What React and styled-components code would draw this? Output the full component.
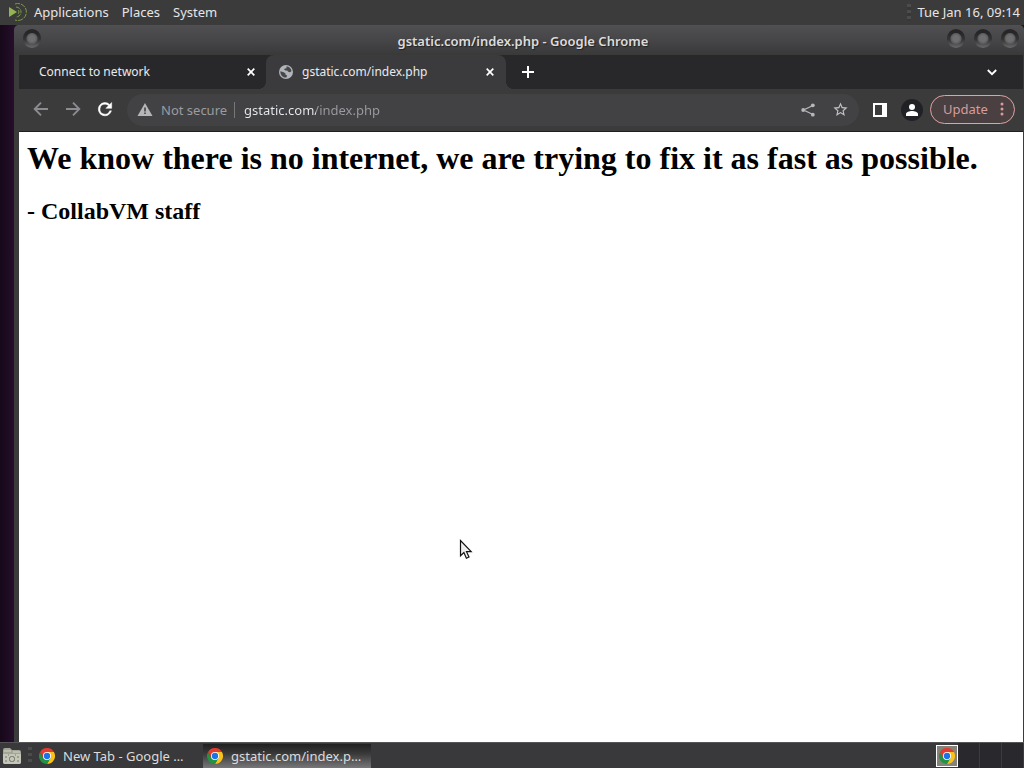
import styled, { createGlobalStyle, css } from "styled-components";

const GlobalStyle = createGlobalStyle`
  * {
    box-sizing: border-box;
  }

  body {
    margin: 0;
    background: #1c0a20;
    font-family: "Noto Sans", sans-serif;
    font-size: 13px;
    line-height: 18px;
  }

  button,
  input {
    margin: 0;
    padding: 0;
    border: 0;
    background: none;
    color: inherit;
    font: inherit;
  }

  svg {
    display: block;
    flex: none;
  }
`;

const Desktop = styled.div`
  min-height: 100vh;
  display: flex;
  flex-direction: column;
  position: relative;
  background: linear-gradient(90deg, #170819, #250e2b 14px);
`;

const TopPanel = styled.header`
  height: 25px;
  padding: 0 4px 1px 8px;
  display: flex;
  align-items: center;
  background: #3b3b3c;
  color: #e6e6e6;
`;

const MenuButton = styled.button`
  height: 24px;
  margin-right: 13px;
  display: flex;
  align-items: center;
  gap: 7px;
`;

const Clock = styled.time`
  margin-left: 6px;
  white-space: nowrap;
`;

const Grip = styled.span`
  width: 4px;
  height: 17px;
  margin-left: ${(props) => (props.$end ? "auto" : "6px")};
  background: repeating-linear-gradient(#4c4c4e 0 3px, #373738 3px 6px);
`;

const Window = styled.main`
  flex: 1;
  margin-left: 14px;
  padding: 0 1px 0 5px;
  display: flex;
  flex-direction: column;
  background: #3b3b3c;
  border-radius: 5px 5px 0 0;
`;

const TitleBar = styled.div`
  height: 30px;
  margin: 0 -1px 0 -5px;
  padding: 4px 5px 0 9px;
  display: grid;
  grid-template-columns: 72px 1fr 72px;
  align-items: start;
  background: linear-gradient(#505052, #464648 50%, #39393a);
  border-radius: 5px 5px 0 0;
`;

const WindowTitle = styled.div`
  padding: 3px 0 0 4px;
  text-align: center;
  color: #dcdcdc;
  font-weight: 600;
  text-shadow: 1px 1px 1px #222;
`;

const WindowControls = styled.div`
  display: flex;
  gap: 9px;
  justify-content: ${(props) => (props.$end ? "flex-end" : "flex-start")};
`;

const ControlButton = styled.button`
  width: 18px;
  height: 19px;
  border-radius: 50%;
  background:
    radial-gradient(circle at 50% 50%, #6e6e70 0 3px, #5c5c5e 5px, transparent 6px),
    linear-gradient(#262627 20%, #343435 55%, #6a6a6c);
`;

const TabStrip = styled.div`
  height: 34px;
  display: flex;
  align-items: stretch;
  background: #28282a;
`;

const Tab = styled.div`
  width: ${(props) => (props.$active ? "240px" : "247px")};
  padding: 0 10px 0 ${(props) => (props.$active ? "13px" : "20px")};
  display: flex;
  align-items: center;
  font-size: 12px;
  color: #e8eaed;

  ${(props) =>
    props.$active &&
    css`
      position: relative;
      background: #3b3b3d;
      border-radius: 8px 8px 0 0;

      &::before,
      &::after {
        content: "";
        position: absolute;
        bottom: 0;
        width: 8px;
        height: 8px;
      }

      &::before {
        left: -8px;
        background: radial-gradient(circle at 0 0, transparent 8px, #3b3b3d 8px);
      }

      &::after {
        right: -8px;
        background: radial-gradient(circle at 100% 0, transparent 8px, #3b3b3d 8px);
      }
    `}
`;

const TabButton = styled.button`
  flex: 1;
  height: 34px;
  display: flex;
  align-items: center;
  gap: 9px;
  line-height: 20px;
  text-align: left;
`;

const IconButton = styled.button`
  width: ${(props) => props.$width || "32px"};
  display: flex;
  align-items: center;
  justify-content: center;
  color: ${(props) => props.$color || "#ffffff"};
`;

const TabSearch = styled(IconButton)`
  margin: 0 15px 0 auto;
`;

const Toolbar = styled.div`
  height: 43px;
  padding: 0 8px 1px 6px;
  display: flex;
  align-items: center;
  border-bottom: 1px solid #1f1f21;
`;

const AddressBar = styled.form`
  flex: 1;
  min-width: 0;
  height: 32px;
  margin: 0 5px 0 6px;
  padding: 0 3px 0 10px;
  display: flex;
  align-items: center;
  border-radius: 16px;
  background: #424245;
  color: #9b9c9f;
`;

const SecurityButton = styled.button`
  display: flex;
  align-items: center;
  gap: 8px;
  white-space: nowrap;
`;

const Divider = styled.span`
  width: 1px;
  height: 16px;
  margin: 0 9px 0 7px;
  background: #77777a;
`;

/* host is light, path is dimmed */
const UrlInput = styled.input`
  flex: 1;
  min-width: 0;
  height: 20px;
  background: linear-gradient(90deg, #e8eaed 72px, #9b9c9f 72px);
  background-clip: text;
  -webkit-text-fill-color: transparent;
  outline: none;
`;

const Avatar = styled.button`
  width: 22px;
  height: 22px;
  margin: 0 7px 0 5px;
  display: flex;
  align-items: center;
  justify-content: center;
  border-radius: 50%;
  background: #202124;
`;

const UpdateButton = styled.button`
  width: 85px;
  height: 29px;
  padding: 0 10px 1px 12px;
  display: flex;
  align-items: center;
  justify-content: space-between;
  border: 1px solid #dba5a3;
  border-radius: 15px;
  background: #4a3f41;
  color: #d99c9c;
`;

const Page = styled.article`
  flex: 1;
  padding: 8px;
  background: #ffffff;
  color: #000000;
  font-family: "Liberation Serif", serif;
`;

const Headline = styled.h1`
  margin: 0 0 21px;
  font-size: 32px;
  line-height: 37px;
`;

const Signature = styled.h2`
  margin: 0;
  font-size: 24px;
  line-height: 27px;
`;

const BottomPanel = styled.footer`
  height: 26px;
  padding-left: 2px;
  display: flex;
  align-items: center;
  background: #39393b;
  border-top: 1px solid #555557;
  color: #dcdcdc;
`;

const TaskList = styled.nav`
  margin-left: 3px;
  display: flex;
`;

const TaskButton = styled.button`
  width: 168px;
  height: 24px;
  padding: 0 8px 0 4px;
  display: flex;
  align-items: center;
  gap: 8px;
  text-align: left;
  background: ${(props) =>
    props.$active ? "linear-gradient(#202021, #39393a 40%, #777779)" : "none"};

  & span {
    overflow: hidden;
    text-overflow: ellipsis;
    white-space: nowrap;
  }
`;

const Workspaces = styled.div`
  height: 25px;
  margin-left: auto;
  display: grid;
  grid-template-columns: 22px repeat(3, 22px);
`;

const Workspace = styled.button`
  height: 25px;
  display: flex;
  align-items: center;
  justify-content: center;
  background: #29292d;
  border-right: 1px solid #3c3c40;

  ${(props) =>
    props.$active &&
    css`
      height: 22px;
      align-self: center;
      border: 1px solid #ffffff;
      background: #85827c;
    `}
`;

const Pointer = styled.svg`
  position: absolute;
  left: 459px;
  top: 539px;
`;

const MateLogo = () => (
  <svg width="19" height="20" viewBox="0 0 19 20" fill="none" stroke="#7d9a4a">
    <path d="M1 5v10l8-5z" fill="#92b552" stroke="none" />
    <path d="M7 2a8.500 8.500 0 1 1 0 16" strokeDasharray="5 1" />
    <path d="M8 5a5 5 0 1 1 0 10" strokeDasharray="4 1" />
    <path d="M10 8a2.500 2.500 0 0 1 0 4" />
  </svg>
);

const ChromeLogo = () => (
  <svg width="16" height="16" viewBox="0 0 48 48">
    <path fill="#e33b2e" d="M24 24 3.200 12A24 24 0 0 1 44.800 12z" />
    <path fill="#fbc116" d="M24 12h20.800A24 24 0 0 1 24 48l10.400-18z" />
    <path fill="#229342" d="M3.200 12A24 24 0 0 0 24 48l10.400-18L24 24 13.600 30z" />
    <path fill="#e33b2e" d="M3.200 12 13.600 30 24 12z" />
    <circle cx="24" cy="24" r="12" fill="#fff" />
    <circle cx="24" cy="24" r="9.500" fill="#1a73e8" />
  </svg>
);

const FolderIcon = () => (
  <svg width="20" height="18" viewBox="0 0 20 18">
    <path d="M1 3q0-2 2-2h5l2 2h7q2 0 2 2v10q0 2-2 2H3q-2 0-2-2z" fill="#a3a596" />
    <path d="M1 7h18v8q0 2-2 2H3q-2 0-2-2z" fill="#c4c6b7" />
    <path d="M2 4h7M11 5h7" stroke="#d4d6c9" />
    <rect x="7.500" y="9.500" width="5" height="5" rx="2" fill="none" stroke="#6f7168" />
    <path d="M4 9v2M4 13v2M16 9v2M16 13v2M6 8h1M13 8h1" stroke="#77796e" />
  </svg>
);

const CloseIcon = () => (
  <svg width="8" height="8" viewBox="0 0 8 8" stroke="currentColor" strokeWidth="1.700">
    <path d="m.7.7 6.600 6.600M7.300.7.700 7.300" />
  </svg>
);

const GlobeIcon = () => (
  <svg width="14" height="14" viewBox="0 0 14 14">
    <circle cx="7" cy="7" r="7" fill="#b1b4b8" />
    <path
      d="M7.500 1.300c2.600.2 4.700 2.200 5 4.700-.8 1.200-2.200 1.600-3.200.8L8 5.500H6.300L5 4.300l1-.8 1.500-.3zM1.400 6.200l3.300 1 1.800 1.200v1.300l1.700.7-.8 2.200C4 12.800 1.500 10.300 1.400 7.200z"
      fill="#47484b"
    />
  </svg>
);

const PlusIcon = () => (
  <svg width="12" height="12" viewBox="0 0 12 12" stroke="currentColor" strokeWidth="2">
    <path d="M6 0v12M0 6h12" />
  </svg>
);

const ChevronIcon = () => (
  <svg width="10" height="7" viewBox="0 0 10 7" fill="none" stroke="currentColor" strokeWidth="1.800">
    <path d="m.8 1 4.200 4.200L9.200 1" />
  </svg>
);

const ArrowIcon = ({ forward }) => (
  <svg width="16" height="16" viewBox="0 0 16 16" fill="none" stroke="currentColor" strokeWidth="1.900">
    <path d={forward ? "M1 7h13M8 .7 14.300 7 8 13.300" : "M15 7H2M8 .7 1.700 7 8 13.300"} />
  </svg>
);

const ReloadIcon = () => (
  <svg width="20" height="20" viewBox="0 0 24 24" fill="currentColor" stroke="currentColor" strokeWidth="0.600">
    <path d="M17.650 5.350A8 8 0 1 0 19.730 13h-2.080A6 6 0 1 1 12 5c1.660 0 3.140.690 4.220 1.780L13 10h7V3z" />
  </svg>
);

const WarningIcon = () => (
  <svg width="16" height="14" viewBox="0 0 16 14">
    <path d="M8 0 15.500 13H.5z" fill="#b5b6b8" />
    <path d="M8 4.500v4M8 9.500V11" stroke="#424245" strokeWidth="1.600" />
  </svg>
);

const ShareIcon = () => (
  <svg width="14" height="14" viewBox="0 0 14 14" fill="currentColor">
    <path d="M12 2.500 2.500 7l9.500 4.500" fill="none" stroke="currentColor" strokeWidth="1.300" />
    <circle cx="11.800" cy="2.300" r="1.900" />
    <circle cx="2.200" cy="7" r="1.900" />
    <circle cx="11.800" cy="11.700" r="1.900" />
  </svg>
);

const StarIcon = () => (
  <svg width="17" height="17" viewBox="0 0 24 24" fill="currentColor">
    <path d="m22 9.240-7.190-.620L12 2 9.190 8.630 2 9.240l5.460 4.730L5.820 21 12 17.270 18.180 21l-1.630-7.030zM12 15.400l-3.760 2.270 1-4.280-3.320-2.880 4.380-.380L12 6.100l1.710 4.040 4.380.380-3.320 2.880 1 4.280z" />
  </svg>
);

const SidePanelIcon = () => (
  <svg width="14" height="14" viewBox="0 0 14 14">
    <path d="M0 0h14v14H0zM2 2v10h7V2z" fill="#fff" fillRule="evenodd" />
  </svg>
);

const PersonIcon = () => (
  <svg width="12" height="12" viewBox="0 0 12 12" fill="#fff">
    <circle cx="6" cy="3" r="3" />
    <path d="M0 12v-2c0-2 3.500-3 6-3s6 1 6 3v2z" />
  </svg>
);

const DotsIcon = () => (
  <svg width="4" height="14" viewBox="0 0 4 14" fill="currentColor">
    <circle cx="2" cy="2" r="1.500" />
    <circle cx="2" cy="7" r="1.500" />
    <circle cx="2" cy="12" r="1.500" />
  </svg>
);

const menus = ["Places", "System"];

export default function App() {
  return (
    <>
      <GlobalStyle />
      <Desktop>
        <TopPanel>
          <MenuButton>
            <MateLogo />
            Applications
          </MenuButton>
          {menus.map((name) => (
            <MenuButton key={name}>{name}</MenuButton>
          ))}
          <Grip $end />
          <Clock>Tue Jan 16, 09:14</Clock>
        </TopPanel>

        <Window>
          <TitleBar>
            <WindowControls>
              <ControlButton aria-label="Window menu" />
            </WindowControls>
            <WindowTitle>gstatic.com/index.php - Google Chrome</WindowTitle>
            <WindowControls $end>
              <ControlButton aria-label="Minimize" />
              <ControlButton aria-label="Maximize" />
              <ControlButton aria-label="Close" />
            </WindowControls>
          </TitleBar>

          <TabStrip>
            <Tab>
              <TabButton>Connect to network</TabButton>
              <IconButton $width="10px" aria-label="Close tab">
                <CloseIcon />
              </IconButton>
            </Tab>
            <Tab $active>
              <TabButton>
                <GlobeIcon />
                gstatic.com/index.php
              </TabButton>
              <IconButton $width="12px" aria-label="Close tab">
                <CloseIcon />
              </IconButton>
            </Tab>
            <IconButton $width="44px" aria-label="New tab">
              <PlusIcon />
            </IconButton>
            <TabSearch aria-label="Search tabs">
              <ChevronIcon />
            </TabSearch>
          </TabStrip>

          <Toolbar>
            <IconButton $color="#8b8c8f" aria-label="Back">
              <ArrowIcon />
            </IconButton>
            <IconButton $color="#8b8c8f" aria-label="Forward">
              <ArrowIcon forward />
            </IconButton>
            <IconButton aria-label="Reload">
              <ReloadIcon />
            </IconButton>
            <AddressBar onSubmit={(e) => e.preventDefault()}>
              <SecurityButton type="button">
                <WarningIcon />
                Not secure
              </SecurityButton>
              <Divider />
              <UrlInput
                aria-label="Address"
                spellCheck="false"
                defaultValue="gstatic.com/index.php"
              />
              <IconButton type="button" $color="#b5b7ba" aria-label="Share">
                <ShareIcon />
              </IconButton>
              <IconButton type="button" $color="#c0c2c5" aria-label="Bookmark">
                <StarIcon />
              </IconButton>
            </AddressBar>
            <IconButton aria-label="Side panel">
              <SidePanelIcon />
            </IconButton>
            <Avatar aria-label="Profile">
              <PersonIcon />
            </Avatar>
            <UpdateButton>
              Update
              <DotsIcon />
            </UpdateButton>
          </Toolbar>

          <Page>
            <Headline>
              We know there is no internet, we are trying to fix it as fast as possible.
            </Headline>
            <Signature>- CollabVM staff</Signature>
          </Page>
        </Window>

        <BottomPanel>
          <IconButton $width="20px" aria-label="Files">
            <FolderIcon />
          </IconButton>
          <Grip />
          <TaskList>
            <TaskButton>
              <ChromeLogo />
              <span>New Tab - Google …</span>
            </TaskButton>
            <TaskButton $active>
              <ChromeLogo />
              <span>gstatic.com/index.p…</span>
            </TaskButton>
          </TaskList>
          <Workspaces>
            <Workspace $active aria-label="Workspace 1">
              <ChromeLogo />
            </Workspace>
            <Workspace aria-label="Workspace 2" />
            <Workspace aria-label="Workspace 3" />
            <Workspace aria-label="Workspace 4" />
          </Workspaces>
        </BottomPanel>

        <Pointer width="14" height="21" viewBox="0 0 14 21">
          <path
            d="M1.500 1.500v15.300l3.400-3.200 2.500 5.600 2.600-1.200-2.500-5.300h4.700z"
            fill="#eee"
            stroke="#111"
            strokeWidth="1.200"
          />
        </Pointer>
      </Desktop>
    </>
  );
}
